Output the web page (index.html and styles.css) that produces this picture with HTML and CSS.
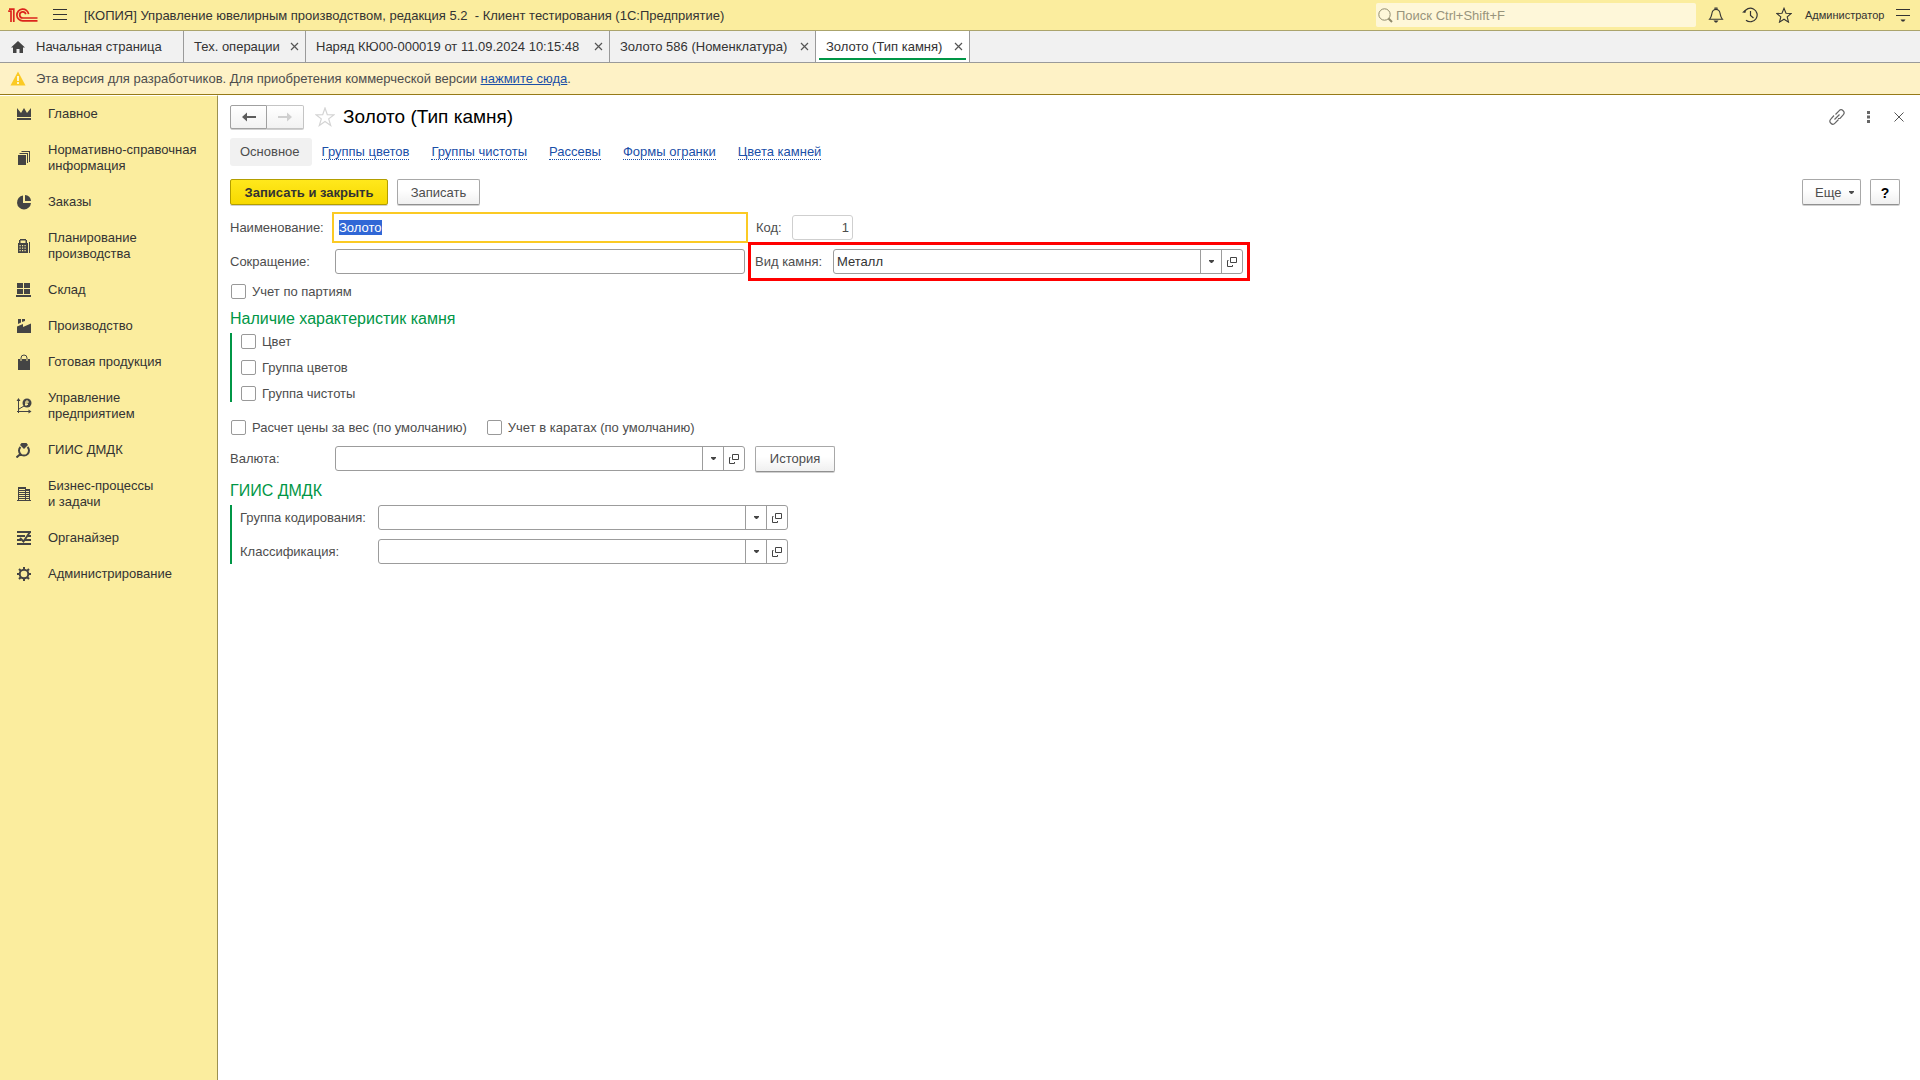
FILE: index.html
```html
<!DOCTYPE html>
<html lang="ru">
<head>
<meta charset="utf-8">
<title>Золото (Тип камня)</title>
<link rel="stylesheet" href="styles.css">
</head>
<body>
<svg class="sprite" aria-hidden="true">
  <symbol id="close" viewBox="0 0 9 9"><path d="M1 1l7 7M8 1l-7 7" fill="none" stroke="currentColor" stroke-width="1.2"/></symbol>
  <symbol id="caret" viewBox="0 0 5 3"><path d="M0 0h5v1L3 3H2L0 1z" fill="currentColor"/></symbol>
  <symbol id="open" viewBox="0 0 10 10"><path d="M3.5.5h6v5h-6zM1.500 3.500H.5v6h5V8" fill="none" stroke="currentColor"/></symbol>
</svg>

<header class="topbar">
  <svg class="logo" width="30" height="14" viewBox="0 0 30 14" fill="none" stroke="#dc241c" stroke-width="1.700" role="img" aria-label="1С">
    <path d="M.2 3.200H3V14M1 1.200H5.800V14"/>
    <path d="M20.600 6.200A5.900 5.900 0 1 0 14.700 12.900H29.500M17.800 6.200A3.100 3.100 0 1 0 14.700 10H29.500"/>
  </svg>
  <button class="icon-btn burger" aria-label="Меню"><svg width="14" height="12" viewBox="0 0 14 12"><path d="M0 .5h14M0 5.500h14M0 10.500h14" stroke="#333"/></svg></button>
  <div class="app-title">[КОПИЯ] Управление ювелирным производством, редакция 5.2 &nbsp;- Клиент тестирования (1С:Предприятие)</div>
  <label class="search">
    <svg width="15" height="15" viewBox="0 0 15 15" fill="none" stroke="#8f8a6c"><circle cx="6.500" cy="6.500" r="5.700"/><path d="M10.500 10.500l3.500 3.500" stroke-width="2"/></svg>
    <input type="search" placeholder="Поиск Ctrl+Shift+F" aria-label="Поиск">
  </label>
  <div class="top-actions">
    <button class="icon-btn" aria-label="Уведомления"><svg width="16" height="16" viewBox="0 0 16 16"><path d="M1.500 12.300C3.500 10 3.500 8.500 4 6c.4-2.300 2-3.500 4-3.500s3.600 1.200 4 3.500c.5 2.500.5 4 2.500 6.300zM7 2.500V1h2v1.500" fill="none" stroke="#333" stroke-width="1.100"/><path d="M5.500 13.500h5L8.800 15.500H7.200z" fill="#333"/></svg></button>
    <button class="icon-btn" aria-label="История"><svg width="16" height="16" viewBox="0 0 16 16" fill="none" stroke="#333" stroke-width="1.200"><path d="M2 5.500A6.800 6.800 0 1 1 4 13.200M8.500 4v4.500l3 2.500"/><path d="M0 5.500h4L3 3z" fill="#333" stroke="none"/></svg></button>
    <button class="icon-btn" aria-label="Избранное"><svg width="16" height="16" viewBox="0 0 16 16" fill="none" stroke="#333" stroke-width="1.100"><path d="M8 1.300l2 4.900 5.200.3-4 3.400 1.300 5.200L8 12.200l-4.500 2.900 1.300-5.200-4-3.400L6 6.200z"/></svg></button>
    <a class="user" href="#">Администратор</a>
    <button class="icon-btn" aria-label="Сервис"><svg width="14" height="14" viewBox="0 0 14 14"><path d="M0 1.500h14M0 7.500h14" stroke="#333"/><path d="M4.500 11.500h5l-1.500 2H6z" fill="#333"/></svg></button>
  </div>
</header>

<nav class="tabs" aria-label="Открытые окна">
  <a class="tab home" href="#"><svg width="16" height="14" viewBox="0 0 16 14"><path d="M8 1l7 6.500h-2V13H9.500V9h-3v4H3V7.500H1z" fill="#444"/></svg><span>Начальная страница</span></a>
  <div class="tab t-ops"><a href="#">Тех. операции</a><button aria-label="Закрыть"><svg><use href="#close"/></svg></button></div>
  <div class="tab t-order"><a href="#">Наряд КЮ00-000019 от 11.09.2024 10:15:48</a><button aria-label="Закрыть"><svg><use href="#close"/></svg></button></div>
  <div class="tab t-item"><a href="#">Золото 586 (Номенклатура)</a><button aria-label="Закрыть"><svg><use href="#close"/></svg></button></div>
  <div class="tab t-stone active"><a href="#">Золото (Тип камня)</a><button aria-label="Закрыть"><svg><use href="#close"/></svg></button></div>
</nav>

<div class="notice">
  <svg width="16" height="15" viewBox="0 0 16 15"><path d="M8 .5L15.500 14.500H.5z" fill="#fbca24"/><path d="M8 5v5M8 11v2" stroke="#fff6cf" stroke-width="2"/></svg>
  <p>Эта версия для разработчиков. Для приобретения коммерческой версии <a href="#">нажмите сюда</a>.</p>
</div>

<div class="workspace">
  <nav class="sidebar" aria-label="Разделы">
    <a href="#"><svg viewBox="0 0 16 16"><path d="M1 2l4 5 3-5 3 5 4-5v9H1zM1 12h14v2H1z"/></svg><span>Главное</span></a>
    <a href="#"><svg viewBox="0 0 16 16"><path d="M2 5h8v10H2zM3.500 3H12v10h-1V4H3.500zM5.500 1H14v11h-1V2H5.500z"/></svg><span>Нормативно-справочная<br>информация</span></a>
    <a href="#"><svg viewBox="0 0 16 16"><path d="M7 1.500V9h8A7 7 0 1 1 7 1.500zM9 1a6 6 0 0 1 6 6H9z"/></svg><span>Заказы</span></a>
    <a href="#"><svg viewBox="0 0 16 16"><path fill-rule="evenodd" d="M4 1h6v1h1v3h1v10H2V5h1V2h1zM4.500 2.500V5h5V2.500zM3.500 7v1.200h1.200V7zm2.500 0v1.200h1.200V7zm2.500 0v1.200h1.200V7zM3.500 9.500v1.200h1.200V9.500zm2.500 0v1.200h1.200V9.500zm2.500 0v1.200h1.200V9.500zM3.500 12v1.200h1.200V12zM6 12v1.200h1.200V12zm2.500 0v1.200h1.200V12zM13 4h1v11h-1z"/></svg><span>Планирование<br>производства</span></a>
    <a href="#"><svg viewBox="0 0 16 16"><path d="M1 1h6v5H1zM8 1h6v5H8zM1 7h6v5H1zM8 7h6v5H8zM0 13h15v2H0z"/></svg><span>Склад</span></a>
    <a href="#"><svg viewBox="0 0 16 16"><path d="M1 15V8.500l6-2.500v3l8-3.500V15zM2 1h3v3.500L2 6zM6 1h3v2L6 4z"/></svg><span>Производство</span></a>
    <a href="#"><svg viewBox="0 0 16 16"><path d="M2 5h12v11H2z"/><path d="M5 5V4a3 3 0 0 1 6 0v1" fill="none" stroke="#444"/><path d="M5 5v2M11 5v2" stroke="#fbed9e"/></svg><span>Готовая продукция</span></a>
    <a href="#"><svg viewBox="0 0 16 16"><path d="M2.500 15V2M1 13.500h13M3 11l5-3" fill="none" stroke="#444"/><path d="M2.500 0l2 3h-4zM15.500 13.500l-3 2v-4z"/><circle cx="11" cy="5" r="4.500"/><path d="M10 8V3h2v2h-3M9 6.500h3" fill="none" stroke="#fbed9e"/></svg><span>Управление<br>предприятием</span></a>
    <a href="#"><svg viewBox="0 0 16 16"><path d="M4.500 5A5 5 0 1 0 11.500 5M4.500 12L.5 15.500" fill="none" stroke="#444" stroke-width="2"/><path d="M5.500 1h5l1.500 2-4 4-4-4z"/></svg><span>ГИИС ДМДК</span></a>
    <a href="#"><svg viewBox="0 0 16 16"><path fill-rule="evenodd" d="M2 1h8v2h4v11h1v1H1v-1h1zM3 3v1h6V3zM3 5v1h6V5zM3 7v1h6V7zM3 9v1h6V9zM3 11v1h6v-1zM3 13v1h6v-1zM10 5v1h3V5zM10 7v1h3V7zM10 9v1h3V9zM10 11v1h3v-1zM10 13v1h3v-1z"/></svg><span>Бизнес-процессы<br>и задачи</span></a>
    <a href="#"><svg viewBox="0 0 16 16"><path d="M1 1h14v2H1zM1 5h8v2H1zM12 5h3v2h-3zM1 9h4v2H1zM9 9h6v2H9zM1 13h14v2H1z"/><path d="M4 8l3.500 3.500L14 2" fill="none" stroke="#444" stroke-width="2"/></svg><span>Органайзер</span></a>
    <a href="#"><svg viewBox="0 0 16 16"><circle cx="8" cy="8" r="4.300" fill="none" stroke="#444" stroke-width="2"/><path d="M8 1v3M8 12v3M1 8h3M12 8h3M3 3l2 2M11 11l2 2M13 3l-2 2M5 11l-2 2" stroke="#444" stroke-width="2"/></svg><span>Администрирование</span></a>
  </nav>

  <main class="page">
    <div class="titlebar">
      <div class="history">
        <button aria-label="Назад"><svg width="14" height="10" viewBox="0 0 14 10"><path d="M0 5l5-4.500V4h9v2H5v3.500z" fill="#5c5c5c"/></svg></button>
        <button aria-label="Вперед"><svg width="14" height="10" viewBox="0 0 14 10"><path d="M14 5L9 .5V4H0v2h9v3.500z" fill="#cfcfcf"/></svg></button>
      </div>
      <button class="icon-btn fav" aria-label="В избранное"><svg width="20" height="20" viewBox="0 0 20 20" fill="none" stroke="#d4d4d4" stroke-width="1.200"><path d="M10 1l2.300 6.600 6.700.2-5.300 4.100 2 6.600L10 14.600l-5.700 3.900 2-6.600L1 7.800l6.700-.2z"/></svg></button>
      <h1>Золото (Тип камня)</h1>
      <div class="page-tools">
        <button class="icon-btn" aria-label="Ссылка"><svg width="16" height="16" viewBox="0 0 16 16" fill="none" stroke="#666" stroke-width="1.200"><path d="M6.500 5.500l3.500-3.700a2.700 2.700 0 0 1 4.200 4L11 9.500H9M9.500 10.500L6 14.200a2.700 2.700 0 0 1-4.200-4L5 6.500M5.500 10.500l5-5"/></svg></button>
        <button class="icon-btn" aria-label="Еще"><svg width="3" height="12" viewBox="0 0 3 12"><path d="M0 0h3v3H0zM0 4.500h3v3H0zM0 9h3v3H0z" fill="#666"/></svg></button>
        <button class="icon-btn" aria-label="Закрыть"><svg width="10" height="10" viewBox="0 0 10 10"><path d="M.5.5l9 9M9.500.5l-9 9" stroke="#555"/></svg></button>
      </div>
    </div>

    <nav class="sections" aria-label="Разделы карточки">
      <a class="current" href="#">Основное</a>
      <a href="#"><span>Группы цветов</span></a>
      <a href="#"><span>Группы чистоты</span></a>
      <a href="#"><span>Рассевы</span></a>
      <a href="#"><span>Формы огранки</span></a>
      <a href="#"><span>Цвета камней</span></a>
    </nav>

    <div class="toolbar">
      <button class="btn primary">Записать и закрыть</button>
      <button class="btn save">Записать</button>
      <button class="btn more">Еще <svg width="5" height="3"><use href="#caret"/></svg></button>
      <button class="btn help">?</button>
    </div>

    <form class="form">
      <div class="row">
        <label class="caption" for="name">Наименование:</label>
        <input class="text focused" id="name" type="text" value="Золото">
        <label class="code-label" for="code">Код:</label>
        <input class="text code" id="code" type="text" value="1" readonly>
      </div>
      <div class="row">
        <label class="caption" for="short">Сокращение:</label>
        <input class="text" id="short" type="text">
        <div class="highlight">
          <label class="kind-label" for="kind">Вид камня:</label>
          <div class="combo"><input id="kind" type="text" value="Металл"><button type="button" aria-label="Выбрать"><svg width="5" height="3"><use href="#caret"/></svg></button><button type="button" aria-label="Открыть"><svg width="10" height="10"><use href="#open"/></svg></button></div>
        </div>
      </div>
      <div class="checks"><label class="check"><input type="checkbox">Учет по партиям</label></div>

      <h2>Наличие характеристик камня</h2>
      <div class="group flags">
        <label class="check"><input type="checkbox">Цвет</label>
        <label class="check"><input type="checkbox">Группа цветов</label>
        <label class="check"><input type="checkbox">Группа чистоты</label>
      </div>

      <div class="checks defaults">
        <label class="check"><input type="checkbox">Расчет цены за вес (по умолчанию)</label>
        <label class="check"><input type="checkbox">Учет в каратах (по умолчанию)</label>
      </div>
      <div class="row">
        <label class="caption" for="currency">Валюта:</label>
        <div class="combo"><input id="currency" type="text"><button type="button" aria-label="Выбрать"><svg width="5" height="3"><use href="#caret"/></svg></button><button type="button" aria-label="Открыть"><svg width="10" height="10"><use href="#open"/></svg></button></div>
        <button type="button" class="btn log">История</button>
      </div>

      <h2>ГИИС ДМДК</h2>
      <div class="group refs">
        <div class="row">
          <label class="caption" for="coding">Группа кодирования:</label>
          <div class="combo"><input id="coding" type="text"><button type="button" aria-label="Выбрать"><svg width="5" height="3"><use href="#caret"/></svg></button><button type="button" aria-label="Открыть"><svg width="10" height="10"><use href="#open"/></svg></button></div>
        </div>
        <div class="row">
          <label class="caption" for="class">Классификация:</label>
          <div class="combo"><input id="class" type="text"><button type="button" aria-label="Выбрать"><svg width="5" height="3"><use href="#caret"/></svg></button><button type="button" aria-label="Открыть"><svg width="10" height="10"><use href="#open"/></svg></button></div>
        </div>
      </div>
    </form>
  </main>
</div>
<script src="script.js"></script>
</body>
</html>
```
FILE: styles.css
```css
* { box-sizing: border-box; }

body {
  margin: 0;
  min-height: 100vh;
  display: flex;
  flex-direction: column;
  background: #fff;
  color: #333;
  font: 13px/16px "Liberation Sans", Arial, sans-serif;
  white-space: nowrap;
}

a { color: inherit; text-decoration: none; }
button, input { font: inherit; color: inherit; }
button { padding: 0; cursor: pointer; }
h1, h2, p { margin: 0; font-weight: normal; }
svg { display: block; flex: none; }
.sprite { position: absolute; width: 0; height: 0; }

.icon-btn {
  display: flex;
  align-items: center;
  justify-content: center;
  width: 16px;
  height: 16px;
  border: 0;
  background: none;
}

/* Top bar */
.topbar {
  display: flex;
  align-items: center;
  height: 31px;
  padding: 0 9px 0 8px;
  background: #fbed9e;
  border-bottom: 1px solid #aba46c;
}
.burger { margin: 0 16px 0 14px; }
.app-title { flex: 1; padding-top: 2px; }
.search {
  display: flex;
  align-items: center;
  gap: 3px;
  width: 320px;
  height: 24px;
  margin: 0 12px;
  padding-left: 2px;
  border-radius: 2px;
  background: #fef7d9;
}
.search input {
  flex: 1;
  min-width: 0;
  height: 22px;
  padding: 0;
  border: 0;
  outline: 0;
  background: none;
}
.search input::placeholder { color: #98947c; opacity: 1; }
.top-actions { display: flex; align-items: center; gap: 18px; }
.user { width: 77px; margin: 0 -5px; font-size: 11px; }

/* Window tabs */
.tabs {
  display: flex;
  height: 32px;
  background: #f1f1f1;
  border-bottom: 1px solid #9a9a9a;
}
.tab {
  display: flex;
  align-items: center;
  justify-content: space-between;
  padding: 0 4px 0 10px;
  border-right: 1px solid #9a9a9a;
}
.tab button {
  display: flex;
  align-items: center;
  justify-content: center;
  width: 14px;
  height: 16px;
  border: 0;
  background: none;
  color: #555;
}
.tab button svg { width: 9px; height: 9px; }
.home { justify-content: flex-start; gap: 10px; width: 184px; }
.t-ops { width: 122px; }
.t-order { width: 304px; }
.t-item { width: 206px; }
.t-stone { width: 154px; }
.tab.active {
  background: linear-gradient(#009646, #009646) center bottom 2px / calc(100% - 6px) 2px no-repeat #fff;
}

/* Notice */
.notice {
  display: flex;
  align-items: center;
  gap: 10px;
  height: 32px;
  padding-left: 10px;
  background: #fef2c6;
  border-bottom: 1px solid #967a18;
  color: #4d4d4d;
}
.notice a { color: #1a4fa8; text-decoration: underline; }

/* Workspace */
.workspace { flex: 1; display: flex; }
.sidebar {
  width: 218px;
  border-top: 1px solid #fff;
  border-right: 1px solid #9c9150;
  background: #fbed9e;
}
.sidebar a {
  display: flex;
  align-items: center;
  gap: 16px;
  padding: 10px 0 10px 16px;
}
.sidebar svg { width: 16px; height: 16px; fill: #444; }

.page { flex: 1; padding: 10px 13px 10px 12px; }

.titlebar { display: flex; align-items: center; height: 24px; }
.history { display: flex; filter: drop-shadow(0 1px 0 #d0d0d0); }
.history button {
  display: flex;
  align-items: center;
  justify-content: center;
  width: 37px;
  height: 24px;
  border: 1px solid #a0a0a0;
  border-radius: 2px 0 0 2px;
  background: linear-gradient(#fff, #f2f2f2);
}
.history button + button { border-left: 0; border-color: #c4c4c4; border-radius: 0 2px 2px 0; }
.fav { width: 20px; height: 20px; margin: 0 8px 0 11px; }
h1 { color: #000; font-size: 19px; line-height: 24px; }
.page-tools { display: flex; gap: 15px; margin-left: auto; }

.sections { display: flex; margin-top: 9px; }
.sections a { padding: 6px 12px 6px 10px; color: #1a4fa8; }
.sections span { border-bottom: 1px dotted #1a4fa8; }
.sections .current { border-radius: 3px; background: #f1f1f1; color: #4d4d4d; }

.toolbar { display: flex; gap: 9px; margin: 13px 0 10px; padding-right: 7px; }
.btn {
  height: 26px;
  padding: 1px 12px 0;
  border: 1px solid #a8a8a8;
  border-bottom-color: #909090;
  border-radius: 2px;
  background: linear-gradient(#fff 40%, #f0f0f0);
  box-shadow: 0 1px 0 #d0d0d0;
  color: #4d4d4d;
}
.btn.primary {
  width: 158px;
  border-color: #b39e00;
  background: linear-gradient(#ffe81c, #f7d900);
  color: #333;
  font-weight: bold;
}
.btn.save { width: 83px; }
.btn.more {
  display: flex;
  align-items: center;
  justify-content: space-between;
  width: 59px;
  margin-left: auto;
  padding-right: 6px;
}
.btn.help { width: 30px; padding: 1px 0 0; color: #000; font-size: 14px; font-weight: bold; }

/* Form */
.form { color: #4d4d4d; }
.row { display: flex; align-items: center; height: 25px; }
.row + .row { margin-top: 9px; }
.caption { width: 105px; }
.text, .combo {
  width: 410px;
  height: 25px;
  border: 1px solid #9c9c9c;
  border-radius: 3px;
  background: #fff;
  color: #333;
}
.text { padding: 0 3px; }
.text.focused { border-color: #fff; border-radius: 0; outline: 2px solid #fbca24; outline-offset: 1px; }
.text.focused::selection { background: #3067d6; color: #fff; }
.text.code { width: 61px; border-color: #cfcfcf; color: #4d4d4d; text-align: right; }
.code-label { width: 37px; margin-left: 10px; padding-left: 1px; }
.combo { display: flex; }
.combo input {
  flex: 1;
  min-width: 0;
  padding: 0 3px;
  border: 0;
  outline: 0;
  background: none;
}
.combo button {
  display: flex;
  align-items: center;
  justify-content: center;
  width: 21px;
  border: 0;
  border-left: 1px solid #9c9c9c;
  background: none;
  color: #444;
}
.highlight {
  display: flex;
  align-items: center;
  margin-left: 10px;
  outline: 3px solid #f00;
  outline-offset: 4px;
}
.kind-label { width: 78px; }

.checks { display: flex; gap: 20px; margin: 10px 0; padding-left: 1px; }
.checks.defaults { margin: 18px 0 11px; }
.check { display: flex; align-items: center; gap: 6px; height: 15px; }
.check input {
  appearance: none;
  width: 15px;
  height: 15px;
  margin: 0;
  border: 1px solid #999;
  border-radius: 2px;
  background: #fff;
}
.log { width: 80px; margin-left: 10px; }

h2 { margin: 10px 0 4px; color: #009646; font-size: 16px; line-height: 20px; }
.group { border-left: 2px solid #009646; }
.flags { display: flex; flex-direction: column; gap: 11px; padding: 1px 0 1px 9px; }
.refs { padding-left: 8px; }
.refs .caption { width: 138px; }
```
FILE: script.js
```js
// Open the card with the name ready to be overwritten.
const nameField = document.getElementById('name');
nameField.focus();
nameField.select();
```
